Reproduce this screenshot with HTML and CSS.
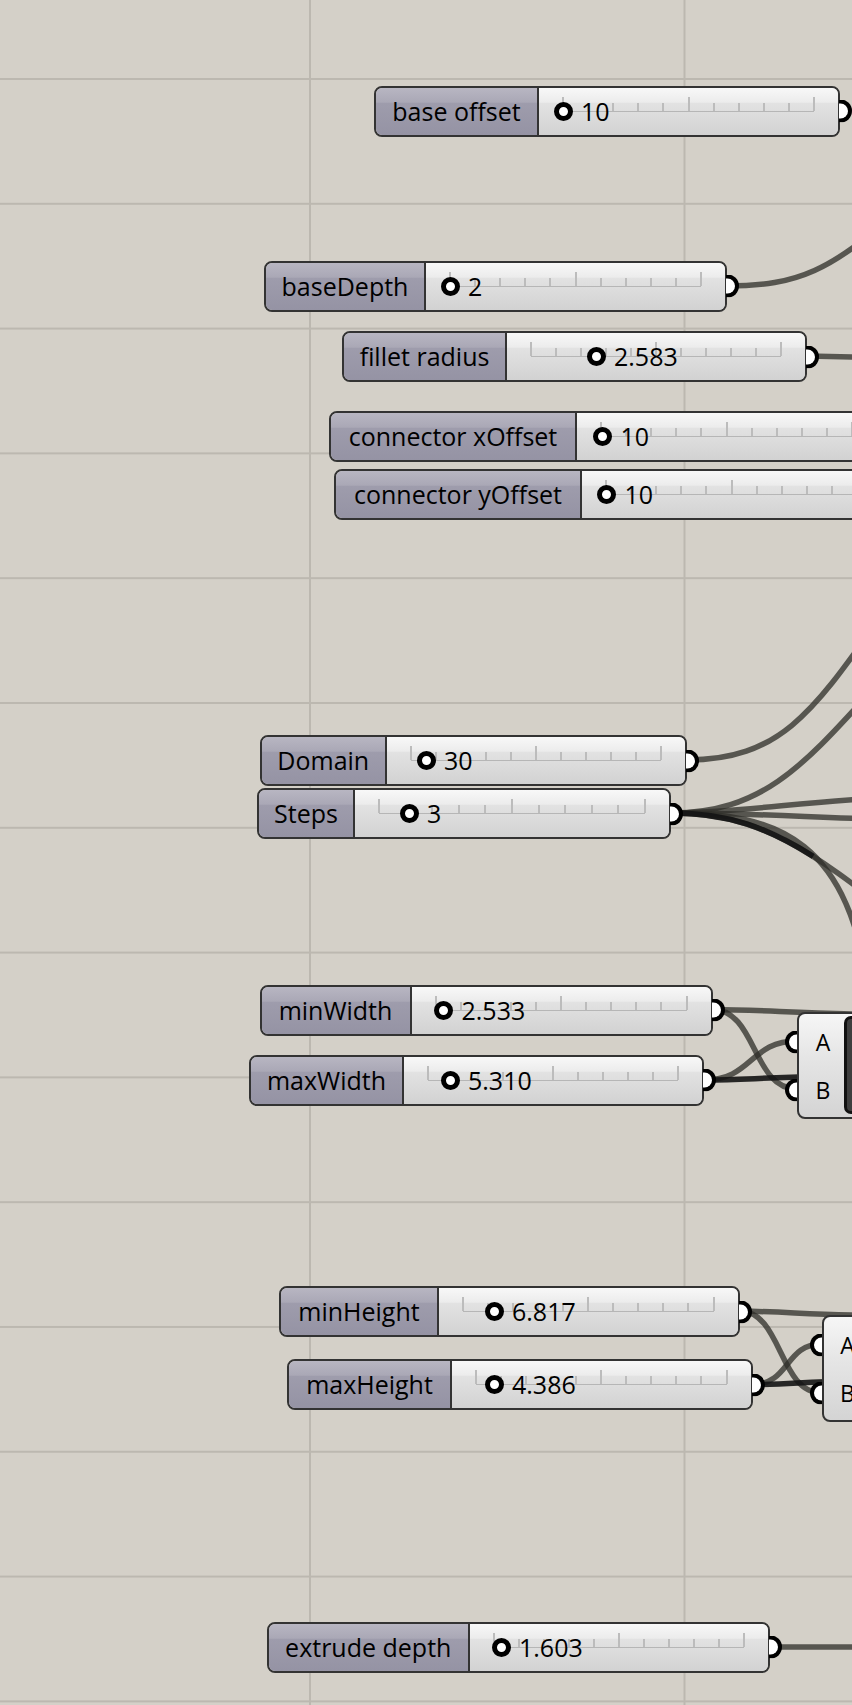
FILE: index.html
```html
<!DOCTYPE html>
<html lang="en">

<head>
    <meta charset="UTF-8">
    <meta name="viewport" content="width=device-width, initial-scale=1.0">
    <title>Grasshopper canvas - sliders</title>
    <link rel="stylesheet" href="styles.css">
</head>

<body>
    <div class="canvas" id="canvas">
        <svg class="wires" width="852" height="1705" viewBox="0 0 852 1705">
            <!-- baseDepth / fillet radius -->
            <path class="wire" d="M726,286 C800,286 830,270 900,210" />
            <path class="wire" d="M807,356 L900,358" />

            <!-- Domain / Steps -->
            <path class="wire" d="M687,760 C790,760 820,700 900,590" />
            <path class="wire" d="M672,813 C775,813 815,750 900,660" />
            <path class="wire" d="M672,813 C750,812 800,801 900,797" />
            <path class="wire" d="M672,813 C750,813 800,817 900,820" />
            <path class="wire" d="M672,813 C760,813 810,850 900,920" />
            <path class="wire" d="M672,813 C780,813 850,840 870,1000" />
            <path class="wire wire-dark wire-bundle" d="M672,813 C760,813 810,850 900,920" />

            <!-- minWidth / maxWidth -->
            <path class="wire" d="M712,1009.5 C760,1010 780,1012 852,1014" />
            <path class="wire" d="M712,1009.5 C757,1009.5 752,1089 797,1089" />
            <path class="wire" d="M704.5,1080 C752,1080 750,1041 797,1041" />
            <path class="wire wire-dark" d="M704.5,1080 C750,1080 760,1077 852,1076" />

            <!-- minHeight / maxHeight -->
            <path class="wire" d="M739.5,1311 C790,1312 800,1314 852,1315" />
            <path class="wire" d="M739.5,1311 C782,1311 779,1393 821.5,1393" />
            <path class="wire" d="M752.5,1384.5 C790,1384.5 785,1344 821.5,1344" />
            <path class="wire wire-dark" d="M752.5,1384.5 C790,1384.5 800,1382 852,1381" />

            <!-- extrude depth -->
            <path class="wire" d="M769,1647 L900,1647" />
        </svg>

        <div class="comp comp-width">
            <div class="inputs">
                <div class="input"><span class="in-port"></span>A</div>
                <div class="input"><span class="in-port"></span>B</div>
            </div>
            <div class="comp-body"></div>
        </div>

        <div class="comp comp-height">
            <div class="inputs">
                <div class="input"><span class="in-port"></span>A</div>
                <div class="input"><span class="in-port"></span>B</div>
            </div>
            <div class="comp-body"></div>
        </div>
    </div>

    <script>
        // x, y = top left of the slider on the canvas
        // lw = label part, vw = value part, g = grip offset on the track
        const sliders = [
            { name: "base offset", value: "10", x: 374, y: 85.5, lw: 165, vw: 301, g: 0 },
            { name: "baseDepth", value: "2", x: 264, y: 260.5, lw: 162, vw: 301, g: 0 },
            { name: "fillet radius", value: "2.583", x: 342, y: 331, lw: 165, vw: 300, g: 65 },
            { name: "connector xOffset", value: "10", x: 329, y: 411, lw: 248, vw: 301, g: 1.5 },
            { name: "connector yOffset", value: "10", x: 334, y: 468.5, lw: 248, vw: 301, g: 0.5 },
            { name: "Domain", value: "30", x: 259.5, y: 735, lw: 127.5, vw: 300, g: 15 },
            { name: "Steps", value: "3", x: 257, y: 788, lw: 98, vw: 316, g: 30 },
            { name: "minWidth", value: "2.533", x: 259.5, y: 984.5, lw: 152, vw: 301, g: 8 },
            { name: "maxWidth", value: "5.310", x: 249, y: 1054.5, lw: 155, vw: 300, g: 22 },
            { name: "minHeight", value: "6.817", x: 279, y: 1286, lw: 160, vw: 300.5, g: 31 },
            { name: "maxHeight", value: "4.386", x: 287, y: 1359, lw: 165, vw: 300.5, g: 18 },
            { name: "extrude depth", value: "1.603", x: 267, y: 1621.5, lw: 202.5, vw: 300, g: 7.5 }
        ];

        const TRACK_LEFT = 24;

        function renderSliders() {
            const canvas = document.getElementById("canvas");
            sliders.forEach(s => {
                const tw = s.vw - 50;
                let ticks = "";
                for (let i = 0; i <= 10; i++) {
                    const cls = i % 5 === 0 ? "tick tick-major" : "tick";
                    ticks += `<span class="${cls}" style="left:${(i * tw / 10 - 1).toFixed(1)}px"></span>`;
                }
                const el = document.createElement("div");
                el.className = "slider";
                el.style.left = s.x + "px";
                el.style.top = s.y + "px";
                el.innerHTML = `
                    <div class="slider-label" style="width:${s.lw - 2}px">${s.name}</div>
                    <div class="slider-value" style="width:${s.vw - 2}px">
                        <div class="track" style="width:${tw}px">${ticks}</div>
                        <span class="grip" style="left:${TRACK_LEFT + s.g - 9.5}px"></span>
                        <span class="num" style="left:${TRACK_LEFT + s.g + 18}px">${s.value}</span>
                    </div>
                    <span class="out-port"></span>
                `;
                canvas.appendChild(el);
            });
        }

        renderSliders();
    </script>
</body>

</html>
```

FILE: styles.css
```css
* {
    margin: 0;
    padding: 0;
    box-sizing: border-box;
}

body {
    background-color: #d4d0c8;
    font-family: "Open Sans", "Noto Sans", sans-serif;
    color: #000;
}

.canvas {
    position: relative;
    width: 852px;
    height: 1705px;
    overflow: hidden;
    background-color: #d4d0c8;
    background-image:
        linear-gradient(to right, #bcb8b0 2px, transparent 2px),
        linear-gradient(to bottom, #bcb8b0 2px, transparent 2px);
    background-size: 374.5px 100%, 100% 124.8px;
    background-position: 309px 0, 0 78px;
}

/* wires */
.wires {
    position: absolute;
    left: 0;
    top: 0;
}

.wire {
    fill: none;
    stroke: rgba(45, 45, 40, 0.75);
    stroke-width: 5.5;
}

.wire-dark {
    stroke: rgba(20, 20, 20, 0.9);
}

.wire-bundle {
    stroke-dasharray: 150 1000;
}

/* number sliders */
.slider {
    position: absolute;
    display: flex;
    height: 51px;
    border: 2px solid #333;
    border-radius: 8px;
    font-size: 25px;
    line-height: 47px;
}

.slider-label {
    text-align: center;
    white-space: nowrap;
    border-right: 2px solid #333;
    border-radius: 6px 0 0 6px;
    background: linear-gradient(to bottom, #b8b6c2 0%, #aaa8b6 30%, #9e9cac 33%, #9593a4 100%);
}

.slider-value {
    position: relative;
    border-radius: 0 6px 6px 0;
    background: linear-gradient(to bottom, #f8f8f8 0%, #ececec 30%, #e2e2e2 33%, #d2d2d2 100%);
}

.track {
    position: absolute;
    left: 24px;
    top: 9px;
    height: 15px;
    border-bottom: 1px solid #b6b6b6;
}

.tick {
    position: absolute;
    bottom: 0;
    width: 2px;
    height: 8px;
    background: #bcbcbc;
}

.tick-major {
    height: 14px;
}

.grip {
    position: absolute;
    top: 14px;
    width: 19px;
    height: 19px;
    border: 5.5px solid #000;
    border-radius: 50%;
    background: #fff;
}

.num {
    position: absolute;
    top: 0;
    white-space: nowrap;
}

.out-port {
    position: absolute;
    left: calc(100% + 1px);
    top: 50%;
    transform: translateY(-50%);
    width: 13px;
    height: 23px;
    border: 4.5px solid #000;
    border-left: 0;
    border-radius: 0 12px 12px 0;
    background: #fff;
}

/* components with A / B inputs */
.comp {
    position: absolute;
    display: flex;
    width: 120px;
    height: 107px;
    border: 2px solid #333;
    border-radius: 8px;
    background: linear-gradient(to bottom, #f6f6f6 0%, #e6e6e6 40%, #d4d4d4 100%);
}

.comp-width {
    left: 797px;
    top: 1011.5px;
}

.comp-height {
    left: 821.5px;
    top: 1315px;
}

.inputs {
    width: 45px;
    padding-top: 4px;
}

.input {
    position: relative;
    height: 48px;
    line-height: 48px;
    padding-left: 3px;
    text-align: center;
    font-size: 23px;
}

.in-port {
    position: absolute;
    left: -14px;
    top: 50%;
    transform: translateY(-50%);
    width: 12px;
    height: 23px;
    border: 4.5px solid #000;
    border-right: 0;
    border-radius: 12px 0 0 12px;
    background: #fff;
}

.comp-body {
    flex: 1;
    margin: 2.5px 0;
    border: 3.5px solid #111;
    border-radius: 7px;
    background: #3e3e3e;
}
```
